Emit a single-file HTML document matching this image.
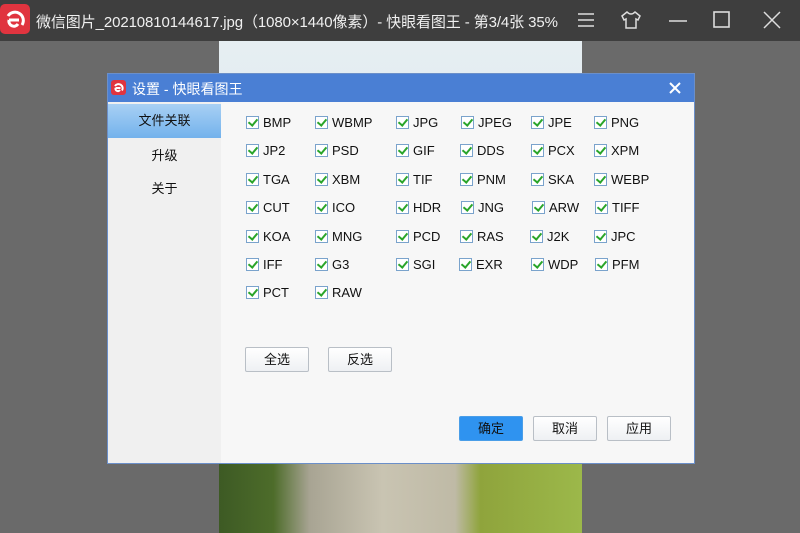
<!DOCTYPE html>
<html><head><meta charset="utf-8"><style>
*{margin:0;padding:0;box-sizing:border-box}
body{width:800px;height:533px;background:#6a6a6a;position:relative;overflow:hidden;font-family:"Liberation Sans","Noto Sans CJK SC",sans-serif}
#tb{position:absolute;left:0;top:0;width:800px;height:41px;background:#3e3e3e;color:#fff}
#tb .t{position:absolute;left:36px;top:11px;font-size:15px;white-space:nowrap;color:#f0f0f0;letter-spacing:-0.1px}
#img{position:absolute;left:219px;top:41px;width:363px;height:492px;background:linear-gradient(#e6eef2,#dfeaf0 30%,#cfdce3 45%,#7b8c5a 85%,#4f6a2e)}
#stones{position:absolute;left:219px;top:463px;width:363px;height:70px;background:linear-gradient(90deg,#3d5a24 0,#4d6c2a 15%,#a8a493 25%,#c9c4b2 45%,#bfbaa6 65%,#8fa43c 72%,#9cb84a 100%)}
#dlg{position:absolute;left:107px;top:73px;width:588px;height:391px;background:#f7f7f7;border:1px solid #6b8fc9}
#dt{position:absolute;left:0;top:0;width:586px;height:28px;background:#4a7fd4;color:#fff;font-size:14px}
#dt span{position:absolute;left:24px;top:5px}
#side{position:absolute;left:0;top:28px;width:113px;height:361px;background:#f0f0f0}
.si{position:absolute;left:0;width:113px;text-align:center;font-size:13px;color:#111}
.sel{background:linear-gradient(#a8d0f4,#73b2ec);height:34px;line-height:34px}
.cb{position:absolute;font-size:13px;color:#111;white-space:nowrap}
.cb i{position:absolute;left:0;top:1px;width:13px;height:13px;background:#fff;border:1px solid #7aa3cc}
.cb i:after{content:"";position:absolute;left:3px;top:0px;width:4px;height:7px;border:solid #2aa52a;border-width:0 2px 2px 0;transform:rotate(40deg)}
.cb span{position:absolute;left:17px;top:0px}
.btn{position:absolute;width:64px;height:25px;border:1px solid #b9bfc6;border-radius:2px;background:linear-gradient(#fff,#eef0f3);font-size:13px;text-align:center;line-height:23px;color:#111}
.btn.p{background:#2f93f0;border-color:#4a9ee8}
</style></head><body>
<div id="tb">
<svg style="position:absolute;left:0;top:4px" width="30" height="30" viewBox="0 0 30 30"><rect x="0" y="0" width="30" height="30" rx="5" fill="#e0343f"/><path d="M8 12 A8 8 0 1 1 22 21" fill="none" stroke="#fff" stroke-width="3"/><path d="M9 16 H19 M9 16 A5 5 0 0 0 18 20" fill="none" stroke="#fff" stroke-width="3"/></svg>
<div class="t">微信图片_20210810144617.jpg（1080×1440像素）- 快眼看图王 - 第3/4张 35%</div>
<svg style="position:absolute;left:576px;top:12px" width="20" height="16"><path d="M2 2H18M2 8H18M2 14H18" stroke="#ddd" stroke-width="1.6"/></svg>
<svg style="position:absolute;left:620px;top:10px" width="22" height="20"><path d="M7 2 L2 6 L4 10 L6 9 V18 H16 V9 L18 10 L20 6 L15 2 Q11 6 7 2Z" fill="none" stroke="#ddd" stroke-width="1.5"/></svg>
<svg style="position:absolute;left:668px;top:18px" width="20" height="6"><path d="M1 3H19" stroke="#ddd" stroke-width="1.5"/></svg>
<svg style="position:absolute;left:712px;top:10px" width="20" height="20"><rect x="2" y="2" width="15" height="15" fill="none" stroke="#ddd" stroke-width="1.6"/></svg>
<svg style="position:absolute;left:762px;top:10px" width="20" height="20"><path d="M2 2L18 18M18 2L2 18" stroke="#ddd" stroke-width="1.5"/></svg>
</div>
<div id="img"></div><div id="stones"></div>
<div id="dlg">
<div id="dt"><svg style="position:absolute;left:3px;top:6px" width="15" height="15" viewBox="0 0 30 30"><rect width="30" height="30" rx="6" fill="#e0343f"/><path d="M8 12 A8 8 0 1 1 22 21" fill="none" stroke="#fff" stroke-width="4"/><path d="M9 16 H19 M9 16 A5 5 0 0 0 18 20" fill="none" stroke="#fff" stroke-width="4"/></svg><span>设置 - 快眼看图王</span>
<svg style="position:absolute;left:561px;top:8px" width="12" height="12"><path d="M1 1L11 11M11 1L1 11" stroke="#fff" stroke-width="2"/></svg></div>
<div id="side">
<div class="si sel" style="top:2px">文件关联</div>
<div class="si" style="top:43px">升级</div>
<div class="si" style="top:76px">关于</div>
</div>
</div>
<div class="btn" style="left:245px;top:347px">全选</div>
<div class="btn" style="left:328px;top:347px">反选</div>
<div class="btn p" style="left:459px;top:416px">确定</div>
<div class="btn" style="left:533px;top:416px">取消</div>
<div class="btn" style="left:607px;top:416px">应用</div>
<div class="cb" style="left:246px;top:115px"><i></i><span>BMP</span></div>
<div class="cb" style="left:315px;top:115px"><i></i><span>WBMP</span></div>
<div class="cb" style="left:396px;top:115px"><i></i><span>JPG</span></div>
<div class="cb" style="left:461px;top:115px"><i></i><span>JPEG</span></div>
<div class="cb" style="left:531px;top:115px"><i></i><span>JPE</span></div>
<div class="cb" style="left:594px;top:115px"><i></i><span>PNG</span></div>
<div class="cb" style="left:246px;top:143px"><i></i><span>JP2</span></div>
<div class="cb" style="left:315px;top:143px"><i></i><span>PSD</span></div>
<div class="cb" style="left:396px;top:143px"><i></i><span>GIF</span></div>
<div class="cb" style="left:460px;top:143px"><i></i><span>DDS</span></div>
<div class="cb" style="left:531px;top:143px"><i></i><span>PCX</span></div>
<div class="cb" style="left:594px;top:143px"><i></i><span>XPM</span></div>
<div class="cb" style="left:246px;top:172px"><i></i><span>TGA</span></div>
<div class="cb" style="left:315px;top:172px"><i></i><span>XBM</span></div>
<div class="cb" style="left:396px;top:172px"><i></i><span>TIF</span></div>
<div class="cb" style="left:460px;top:172px"><i></i><span>PNM</span></div>
<div class="cb" style="left:531px;top:172px"><i></i><span>SKA</span></div>
<div class="cb" style="left:594px;top:172px"><i></i><span>WEBP</span></div>
<div class="cb" style="left:246px;top:200px"><i></i><span>CUT</span></div>
<div class="cb" style="left:315px;top:200px"><i></i><span>ICO</span></div>
<div class="cb" style="left:396px;top:200px"><i></i><span>HDR</span></div>
<div class="cb" style="left:461px;top:200px"><i></i><span>JNG</span></div>
<div class="cb" style="left:532px;top:200px"><i></i><span>ARW</span></div>
<div class="cb" style="left:595px;top:200px"><i></i><span>TIFF</span></div>
<div class="cb" style="left:246px;top:229px"><i></i><span>KOA</span></div>
<div class="cb" style="left:315px;top:229px"><i></i><span>MNG</span></div>
<div class="cb" style="left:396px;top:229px"><i></i><span>PCD</span></div>
<div class="cb" style="left:460px;top:229px"><i></i><span>RAS</span></div>
<div class="cb" style="left:530px;top:229px"><i></i><span>J2K</span></div>
<div class="cb" style="left:594px;top:229px"><i></i><span>JPC</span></div>
<div class="cb" style="left:246px;top:257px"><i></i><span>IFF</span></div>
<div class="cb" style="left:315px;top:257px"><i></i><span>G3</span></div>
<div class="cb" style="left:396px;top:257px"><i></i><span>SGI</span></div>
<div class="cb" style="left:459px;top:257px"><i></i><span>EXR</span></div>
<div class="cb" style="left:531px;top:257px"><i></i><span>WDP</span></div>
<div class="cb" style="left:595px;top:257px"><i></i><span>PFM</span></div>
<div class="cb" style="left:246px;top:285px"><i></i><span>PCT</span></div>
<div class="cb" style="left:315px;top:285px"><i></i><span>RAW</span></div>
</body></html>
